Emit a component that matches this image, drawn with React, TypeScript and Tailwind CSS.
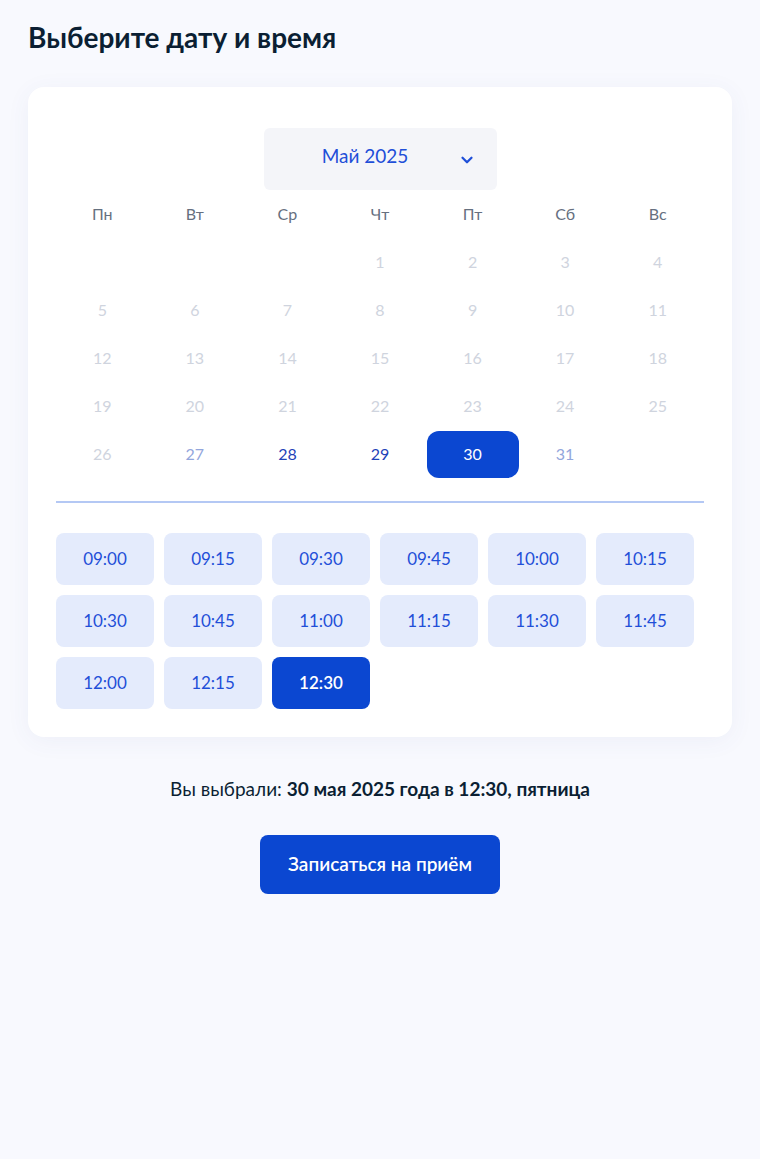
import { ChevronDown } from "lucide-react";

const weekdays = ["Пн", "Вт", "Ср", "Чт", "Пт", "Сб", "Вс"];

type Day = { n: number | null; state: "off" | "soft" | "on" | "selected" };

const days: Day[] = [
  ...[null, null, null].map((n) => ({ n, state: "off" as const })),
  ...Array.from({ length: 31 }, (_, i) => {
    const n = i + 1;
    let state: Day["state"] = "off";
    if (n === 27 || n === 31) state = "soft";
    if (n === 28 || n === 29) state = "on";
    if (n === 30) state = "selected";
    return { n, state };
  }),
];

const times = [
  "09:00", "09:15", "09:30", "09:45", "10:00", "10:15",
  "10:30", "10:45", "11:00", "11:15", "11:30", "11:45",
  "12:00", "12:15", "12:30",
];

const dayClass: Record<Day["state"], string> = {
  off: "text-[#cfd4de]",
  soft: "text-[#93a6dc]",
  on: "text-[#1f43b8]",
  selected: "rounded-xl bg-[#0b47d1] text-white",
};

export default function App() {
  return (
    <div className="min-h-[1159px] w-[760px] bg-[#f8f9fe] px-7 pt-[19px] font-['Lato','Noto_Sans',sans-serif] text-[#0b1f33]">
      <h1 className="text-[28px] font-bold leading-9">Выберите дату и время</h1>

      <section className="mt-[32px] rounded-2xl bg-white px-7 pb-7 pt-[41px] shadow-[0_4px_24px_rgba(60,80,160,0.06)]">
        <div className="flex justify-center">
          <button
            type="button"
            className="relative flex h-[62px] w-[233px] items-center justify-center rounded-md bg-[#f4f5f9] text-[19px] text-[#1f4fd8]"
          >
            <span className="-ml-[30px] -mt-[6px]">Май 2025</span>
            <ChevronDown className="absolute right-[21px] top-[23px] size-[18px]" strokeWidth={3} />
          </button>
        </div>

        <div className="grid grid-cols-7">
          {weekdays.map((w) => (
            <div key={w} className="flex h-12 items-center justify-center text-[16px] text-[#66707f]">
              {w}
            </div>
          ))}
          {days.map((d, i) => (
            <div key={i} className="flex h-12 items-center justify-center">
              {d.n !== null ? (
                <span
                  className={`flex h-[47px] w-[92px] items-center justify-center text-[16px] ${dayClass[d.state]}`}
                >
                  {d.n}
                </span>
              ) : null}
            </div>
          ))}
        </div>

        <div className="mb-[30px] mt-[23px] h-[2px] bg-[#b4c8f4]" />

        <div className="grid grid-cols-[repeat(6,98px)] gap-x-[10px] gap-y-[10px]">
          {times.map((t) => (
            <button
              key={t}
              type="button"
              className={`flex h-[52px] items-center justify-center rounded-lg text-[17px] ${
                t === "12:30"
                  ? "bg-[#0b47d1] font-semibold text-white"
                  : "bg-[#e4ebfc] text-[#1f4fd8]"
              }`}
            >
              {t}
            </button>
          ))}
        </div>
      </section>

      <p className="mt-[38px] text-center text-[19px]">
        Вы выбрали: <span className="font-bold">30 мая 2025 года в 12:30, пятница</span>
      </p>

      <div className="mt-[31px] flex justify-center">
        <button
          type="button"
          className="h-[59px] w-[240px] rounded-lg bg-[#0b47d1] text-[19px] font-semibold text-white"
        >
          Записаться на приём
        </button>
      </div>
    </div>
  );
}
